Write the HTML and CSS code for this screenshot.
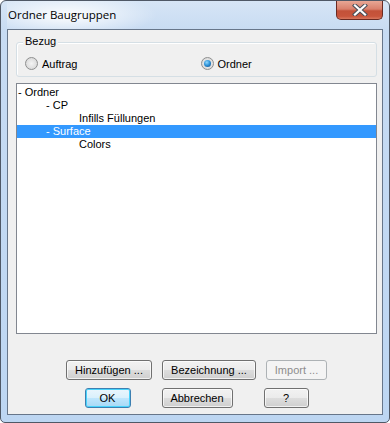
FILE: index.html
```html
<!DOCTYPE html>
<html lang="de">
<head>
<meta charset="UTF-8">
<title>Ordner Baugruppen</title>
<link rel="stylesheet" href="styles.css">
</head>
<body>

<div class="window">
  <div class="titlebar">
    <span class="title">Ordner Baugruppen</span>
    <div class="close">
      <svg width="16" height="12" viewBox="0 0 16 12">
        <path d="M3 1.5 L13 10.5 M13 1.5 L3 10.5" stroke="#4a4f59" stroke-width="4.2" stroke-linecap="square"/>
        <path d="M3 1.5 L13 10.5 M13 1.5 L3 10.5" stroke="#ffffff" stroke-width="2.2" stroke-linecap="square"/>
      </svg>
    </div>
  </div>

  <div class="client">
    <div class="group">
      <span class="legend">Bezug</span>
      <div class="radios">
        <label class="radio"><span class="dot"></span>Auftrag</label>
        <label class="radio checked"><span class="dot"></span>Ordner</label>
      </div>
    </div>

    <div class="tree">
      <div class="node lvl1">- Ordner</div>
      <div class="node lvl2">- CP</div>
      <div class="node lvl3">Infills Füllungen</div>
      <div class="node lvl2 selected">- Surface</div>
      <div class="node lvl3">Colors</div>
    </div>

    <div class="buttons">
      <div class="row row-top">
        <button class="btn btn-add">Hinzufügen ...</button>
        <button class="btn btn-name">Bezeichnung ...</button>
        <button class="btn btn-import" disabled>Import ...</button>
      </div>
      <div class="row row-bottom">
        <button class="btn btn-ok default">OK</button>
        <button class="btn btn-cancel">Abbrechen</button>
        <button class="btn btn-help">?</button>
      </div>
    </div>
  </div>
</div>

</body>
</html>
```

FILE: styles.css
```css
body {
  margin: 0;
  padding: 0;
  background: #ffffff;
  font-family: "Liberation Sans", Arial, sans-serif;
  font-size: 11px;
  color: #000000;
}

.window {
  box-sizing: border-box;
  width: 390px;
  height: 423px;
  border: 1px solid #4f5866;
  border-radius: 6px 6px 5px 5px;
  background: linear-gradient(to bottom, #d6e5f6 0px, #c7dbf2 30px, #bdd6f2 100%);
  padding: 0 6px 7px 6px;
  display: flex;
  flex-direction: column;
  overflow: hidden;
}

.titlebar {
  height: 28px;
  display: flex;
  align-items: flex-start;
  justify-content: space-between;
  background: radial-gradient(ellipse 90px 22px at 60px 14px, rgba(255,255,255,0.95), rgba(255,255,255,0) 100%);
}

.title {
  font-family: "Open Sans", "Noto Sans", sans-serif;
  font-size: 11.5px;
  margin-top: 6px;
  margin-left: 1px;
  color: #000000;
}

.close {
  box-sizing: border-box;
  width: 47px;
  height: 19px;
  margin-right: 0;
  border: 1px solid #6a2a22;
  border-top: none;
  border-radius: 0 0 5px 5px;
  background: linear-gradient(to bottom, #e8a795 0%, #d9806c 45%, #c35139 55%, #c8553c 85%, #d9785f 100%);
  display: flex;
  align-items: center;
  justify-content: center;
}

.client {
  flex: 1;
  border: 1px solid #67768a;
  background: #f0f0f0;
  display: flex;
  flex-direction: column;
  padding: 0 5px 0 8px;
}

.group {
  position: relative;
  margin-top: 12px;
  height: 33px;
  border: 1px solid #d5dfe5;
  border-radius: 3px;
  box-shadow: inset 1px 1px 0 #ffffff;
}

.legend {
  position: absolute;
  top: -8px;
  left: 6px;
  padding: 0 2px;
  background: #f0f0f0;
}

.radios {
  display: flex;
  margin-top: 14px;
  padding-left: 8px;
}

.radio {
  display: flex;
  align-items: center;
  width: 176px;
}

.dot {
  box-sizing: border-box;
  width: 13px;
  height: 13px;
  border-radius: 50%;
  border: 1px solid #8e8f8f;
  background: radial-gradient(circle at 50% 50%, #f4f4f4 0, #dcdcdc 70%, #cfcfcf 100%);
  margin-right: 4px;
  position: relative;
}

.radio.checked .dot::after {
  content: "";
  position: absolute;
  left: 2px;
  top: 2px;
  width: 7px;
  height: 7px;
  border-radius: 50%;
  background: radial-gradient(circle at 40% 35%, #8fd8ff 0, #2a8fd6 50%, #15457a 100%);
}

.tree {
  margin-top: 6px;
  height: 247px;
  border: 1px solid #828790;
  background: #ffffff;
  padding-top: 2px;
}

.node {
  height: 13px;
  line-height: 13px;
  white-space: nowrap;
}

.lvl1 { padding-left: 1px; }
.lvl2 { padding-left: 29px; }
.lvl3 { padding-left: 62px; }

.node.selected {
  background: #3399ff;
  color: #ffffff;
}

.buttons {
  display: flex;
  flex-direction: column;
  gap: 8px;
  margin-top: 26px;
}

.row {
  display: flex;
  justify-content: center;
}

.row-top { gap: 10px; }
.row-bottom { gap: 31px; }

.btn {
  box-sizing: border-box;
  height: 20px;
  padding: 0;
  font-family: "Liberation Sans", Arial, sans-serif;
  font-size: 11px;
  color: #000000;
  border: 1px solid #707070;
  border-radius: 3px;
  background: linear-gradient(to bottom, #f2f2f2 0%, #ebebeb 50%, #dddddd 51%, #cfcfcf 100%);
  box-shadow: inset 0 0 0 1px rgba(255,255,255,0.7);
}

.btn-add { width: 86px; }
.btn-name { width: 94px; }
.btn-import { width: 61px; }
.btn-ok { width: 46px; }
.btn-cancel { width: 71px; }
.btn-help { width: 45px; }

.btn:disabled {
  color: #8d8d8d;
  border-color: #adb2b5;
  background: #f4f4f4;
  box-shadow: none;
}

.btn.default {
  border-color: #3c7fb1;
  background: linear-gradient(to bottom, #eaf6fd 0%, #d9f0fc 50%, #bee6fd 51%, #a7d9f5 100%);
  box-shadow: inset 0 0 0 1px #48d3fb;
}
```
